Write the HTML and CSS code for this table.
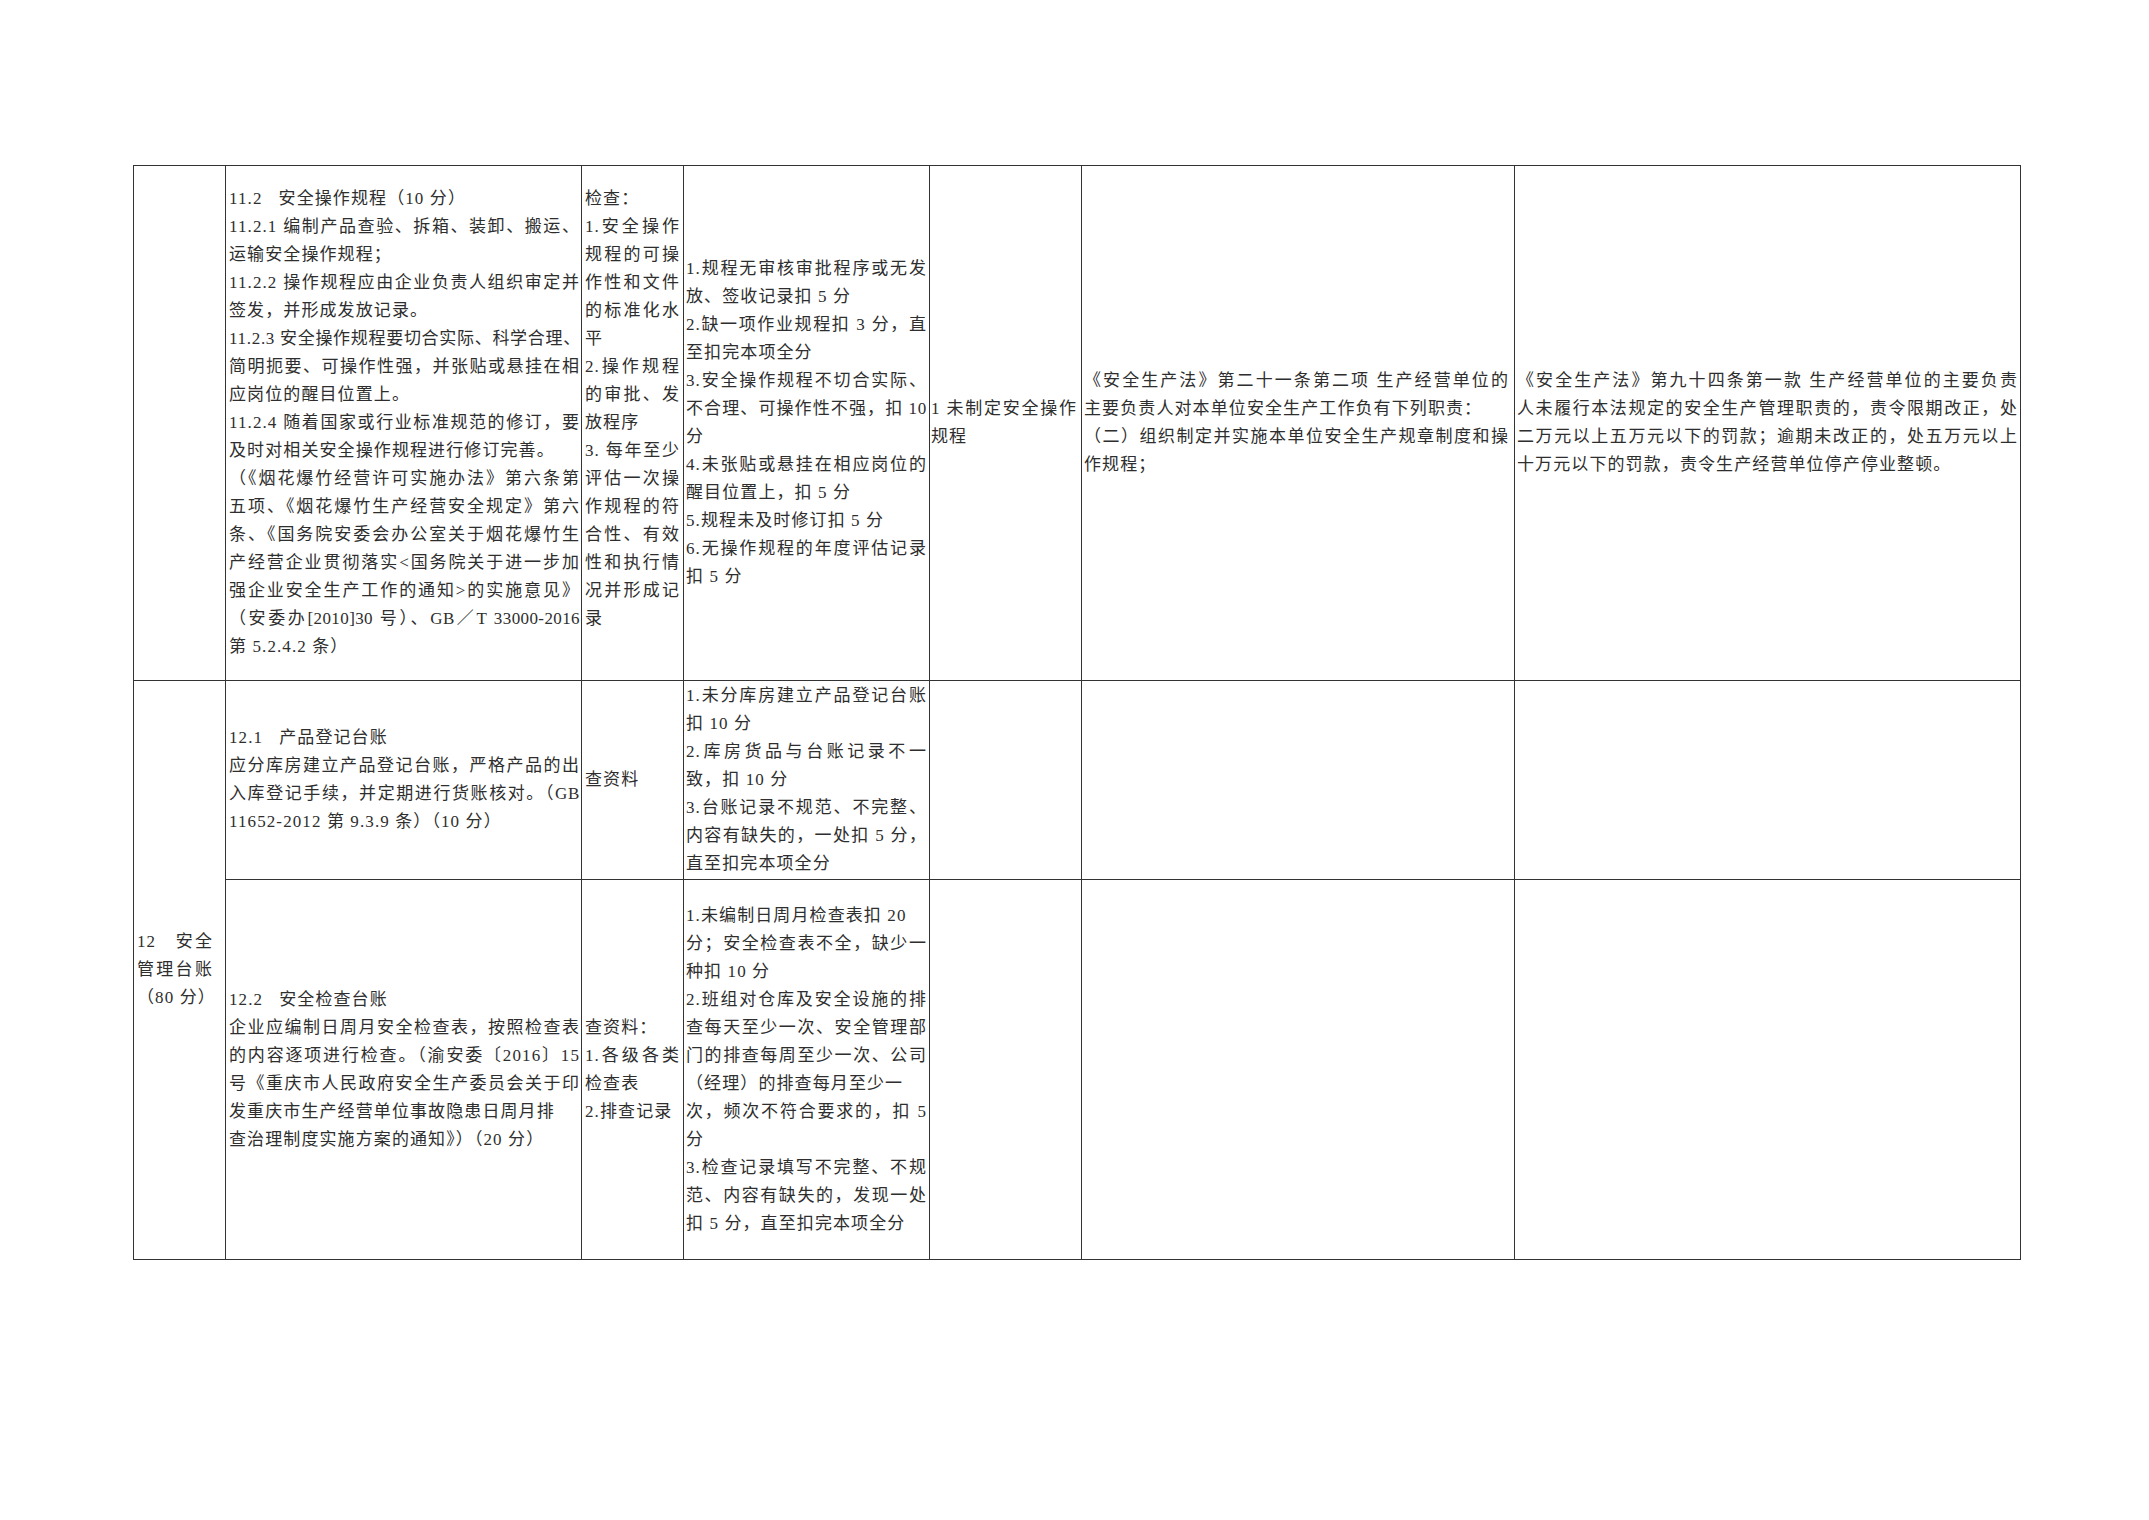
FILE: index.html
```html
<!DOCTYPE html>
<html lang="zh-CN">
<head>
<meta charset="utf-8">
<title>安全管理台账</title>
<link rel="stylesheet" href="styles.css">
</head>
<body>
<div class="page">
<table class="grid">
<colgroup>
<col class="w1"><col class="w2"><col class="w3"><col class="w4"><col class="w5"><col class="w6"><col class="w7">
</colgroup>
<tr class="r1">
<td class="c1"></td>
<td class="c2">
<div class="l e">11.2&nbsp;&nbsp;&nbsp;安全操作规程（10 分）</div>
<div class="l">11.2.1 编制产品查验、拆箱、装卸、搬运、</div>
<div class="l e">运输安全操作规程；</div>
<div class="l">11.2.2 操作规程应由企业负责人组织审定并</div>
<div class="l e">签发，并形成发放记录。</div>
<div class="l s">11.2.3 安全操作规程要切合实际、科学合理、</div>
<div class="l">简明扼要、可操作性强，并张贴或悬挂在相</div>
<div class="l e">应岗位的醒目位置上。</div>
<div class="l">11.2.4 随着国家或行业标准规范的修订，要</div>
<div class="l e">及时对相关安全操作规程进行修订完善。</div>
<div class="l">（《烟花爆竹经营许可实施办法》第六条第</div>
<div class="l">五项、《烟花爆竹生产经营安全规定》第六</div>
<div class="l">条、《国务院安委会办公室关于烟花爆竹生</div>
<div class="l">产经营企业贯彻落实&lt;国务院关于进一步加</div>
<div class="l">强企业安全生产工作的通知&gt;的实施意见》</div>
<div class="l t">（安委办[2010]30 号）、GB／T 33000-2016</div>
<div class="l e">第 5.2.4.2 条）</div>
</td>
<td class="c3">
<div class="l e">检查：</div>
<div class="l">1.安全操作</div>
<div class="l">规程的可操</div>
<div class="l">作性和文件</div>
<div class="l">的标准化水</div>
<div class="l e">平</div>
<div class="l">2.操作规程</div>
<div class="l">的审批、发</div>
<div class="l e">放程序</div>
<div class="l">3. 每年至少</div>
<div class="l">评估一次操</div>
<div class="l">作规程的符</div>
<div class="l">合性、有效</div>
<div class="l">性和执行情</div>
<div class="l">况并形成记</div>
<div class="l e">录</div>
<div class="l e">&nbsp;</div>
</td>
<td class="c4">
<div class="l">1.规程无审核审批程序或无发</div>
<div class="l e">放、签收记录扣 5 分</div>
<div class="l">2.缺一项作业规程扣 3 分，直</div>
<div class="l e">至扣完本项全分</div>
<div class="l">3.安全操作规程不切合实际、</div>
<div class="l s">不合理、可操作性不强，扣 10</div>
<div class="l e">分</div>
<div class="l">4.未张贴或悬挂在相应岗位的</div>
<div class="l e">醒目位置上，扣 5 分</div>
<div class="l e">5.规程未及时修订扣 5 分</div>
<div class="l">6.无操作规程的年度评估记录</div>
<div class="l e">扣 5 分</div>
</td>
<td class="c5">
<div class="l">1 未制定安全操作</div>
<div class="l e">规程</div>
</td>
<td class="c6">
<div class="l">《安全生产法》第二十一条第二项 生产经营单位的</div>
<div class="l e">主要负责人对本单位安全生产工作负有下列职责：</div>
<div class="l">（二）组织制定并实施本单位安全生产规章制度和操</div>
<div class="l e">作规程；</div>
</td>
<td class="c7">
<div class="l">《安全生产法》第九十四条第一款 生产经营单位的主要负责</div>
<div class="l">人未履行本法规定的安全生产管理职责的，责令限期改正，处</div>
<div class="l">二万元以上五万元以下的罚款；逾期未改正的，处五万元以上</div>
<div class="l e">十万元以下的罚款，责令生产经营单位停产停业整顿。</div>
</td>
</tr>
<tr class="r2">
<td class="c1" rowspan="2">
<div class="l">12&nbsp;&nbsp;&nbsp;安全</div>
<div class="l">管理台账</div>
<div class="l">（80 分）</div>
</td>
<td class="c2">
<div class="l e">12.1&nbsp;&nbsp;&nbsp;产品登记台账</div>
<div class="l">应分库房建立产品登记台账，严格产品的出</div>
<div class="l s">入库登记手续，并定期进行货账核对。（GB</div>
<div class="l e">11652-2012 第 9.3.9 条）（10 分）</div>
</td>
<td class="c3">
<div class="l e">查资料</div>
</td>
<td class="c4">
<div class="l">1.未分库房建立产品登记台账</div>
<div class="l e">扣 10 分</div>
<div class="l">2.库房货品与台账记录不一</div>
<div class="l e">致，扣 10 分</div>
<div class="l">3.台账记录不规范、不完整、</div>
<div class="l">内容有缺失的，一处扣 5 分，</div>
<div class="l e">直至扣完本项全分</div>
</td>
<td class="c5"></td>
<td class="c6"></td>
<td class="c7"></td>
</tr>
<tr class="r3">
<td class="c2">
<div class="l e">12.2&nbsp;&nbsp;&nbsp;安全检查台账</div>
<div class="l">企业应编制日周月安全检查表，按照检查表</div>
<div class="l">的内容逐项进行检查。（渝安委〔2016〕15</div>
<div class="l">号《重庆市人民政府安全生产委员会关于印</div>
<div class="l e">发重庆市生产经营单位事故隐患日周月排</div>
<div class="l e">查治理制度实施方案的通知》）（20 分）</div>
</td>
<td class="c3">
<div class="l e">查资料：</div>
<div class="l">1.各级各类</div>
<div class="l e">检查表</div>
<div class="l e">2.排查记录</div>
</td>
<td class="c4">
<div class="l e">1.未编制日周月检查表扣 20</div>
<div class="l">分；安全检查表不全，缺少一</div>
<div class="l e">种扣 10 分</div>
<div class="l">2.班组对仓库及安全设施的排</div>
<div class="l">查每天至少一次、安全管理部</div>
<div class="l">门的排查每周至少一次、公司</div>
<div class="l e">（经理）的排查每月至少一</div>
<div class="l">次，频次不符合要求的，扣 5</div>
<div class="l e">分</div>
<div class="l">3.检查记录填写不完整、不规</div>
<div class="l">范、内容有缺失的，发现一处</div>
<div class="l e">扣 5 分，直至扣完本项全分</div>
</td>
<td class="c5"></td>
<td class="c6"></td>
<td class="c7"></td>
</tr>
</table>
</div>
</body>
</html>
```

FILE: styles.css
```css
html, body {
  margin: 0;
  padding: 0;
  background: #ffffff;
}

.page {
  padding: 165px 0 0 133px;
}

.grid {
  border-collapse: collapse;
  table-layout: fixed;
  width: 1887px;
  font-family: "Liberation Serif", "Noto Sans CJK SC", serif;
  font-size: 17px;
  line-height: 28px;
  letter-spacing: 1.1px;
  color: #2e2e2e;
}

.w1 { width: 92px; }
.w2 { width: 356px; }
.w3 { width: 102px; }
.w4 { width: 246px; }
.w5 { width: 152px; }
.w6 { width: 433px; }
.w7 { width: 506px; }

.r1 { height: 515px; }
.r2 { height: 199px; }
.r3 { height: 380px; }

.grid td {
  border: 1px solid #333333;
  vertical-align: middle;
  padding: 0 2px;
  overflow: hidden;
}

.grid td.c1 { padding: 0 12px 0 3px; }
.grid td.c2 { padding: 0 1px 0 3px; }
.grid td.c3 { padding: 0 3px 0 3px; }
.grid td.c4 { padding: 0 2px 0 2px; }
.grid td.c5 { padding: 0 4px 0 1px; }
.grid td.c6 { padding: 0 5px 0 2px; }
.grid td.c7 { padding: 0 2px 0 2px; }

.l {
  height: 28px;
  white-space: nowrap;
  text-align: justify;
  text-align-last: justify;
}

.l.e {
  text-align: left;
  text-align-last: left;
}

.l.s {
  letter-spacing: 0.7px;
}

.l.t {
  letter-spacing: 0.4px;
}
```
